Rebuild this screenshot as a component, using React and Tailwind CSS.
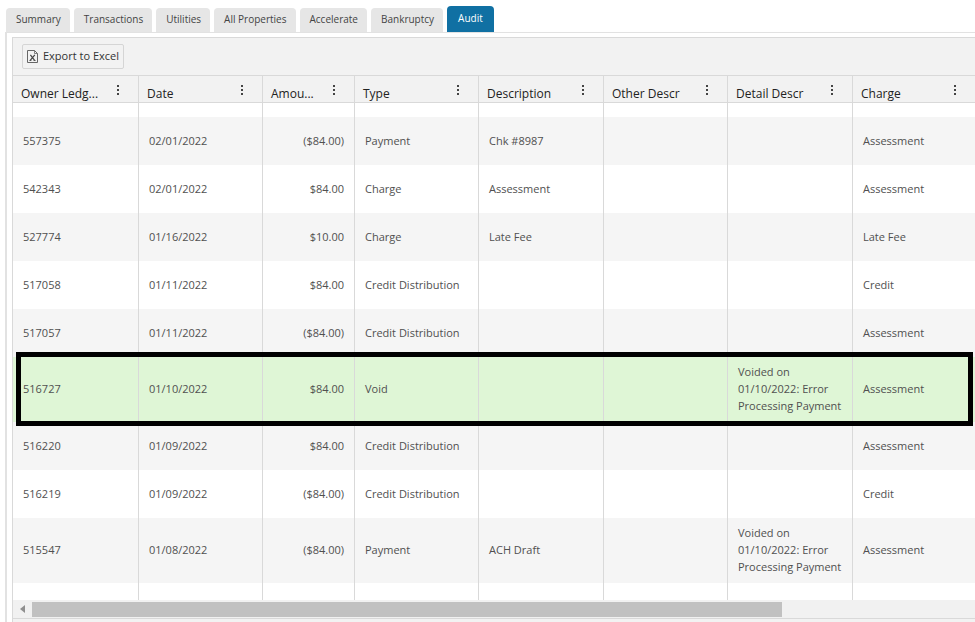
const tabs = [
  "Summary",
  "Transactions",
  "Utilities",
  "All Properties",
  "Accelerate",
  "Bankruptcy",
  "Audit",
];

const columns = [
  { label: "Owner Ledg...", width: "w-[126px]" },
  { label: "Date", width: "w-[124px]" },
  { label: "Amou...", width: "w-[92px]" },
  { label: "Type", width: "w-[124px]" },
  { label: "Description", width: "w-[125px]" },
  { label: "Other Descr", width: "w-[124px]" },
  { label: "Detail Descr", width: "w-[125px]" },
  { label: "Charge", width: "w-auto" },
];

const voidNote = "Voided on 01/10/2022: Error Processing Payment";

const rows = [
  ["557375", "02/01/2022", "($84.00)", "Payment", "Chk #8987", "", "", "Assessment"],
  ["542343", "02/01/2022", "$84.00", "Charge", "Assessment", "", "", "Assessment"],
  ["527774", "01/16/2022", "$10.00", "Charge", "Late Fee", "", "", "Late Fee"],
  ["517058", "01/11/2022", "$84.00", "Credit Distribution", "", "", "", "Credit"],
  ["517057", "01/11/2022", "($84.00)", "Credit Distribution", "", "", "", "Assessment"],
  ["516727", "01/10/2022", "$84.00", "Void", "", "", voidNote, "Assessment"],
  ["516220", "01/09/2022", "$84.00", "Credit Distribution", "", "", "", "Assessment"],
  ["516219", "01/09/2022", "($84.00)", "Credit Distribution", "", "", "", "Credit"],
  ["515547", "01/08/2022", "($84.00)", "Payment", "ACH Draft", "", voidNote, "Assessment"],
];

const HIGHLIGHTED = "516727";

const App = () => {
  return (
    <main className="flex min-h-screen flex-col overflow-hidden bg-white pl-[5px] pt-[6px] font-['Open_Sans',sans-serif] text-[#505050]">
      <Tabs />
      <section className="flex flex-1 flex-col border-l-2 border-t border-[#e2e2e2] pl-[5px] pt-1">
        <div className="flex flex-1 flex-col border-l border-t border-[#d9d9d9] bg-[#f2f2f2]">
          <Toolbar />
          <LedgerTable />
          <ScrollBar />
          <div className="flex-1 border-t border-[#d9d9d9]" />
        </div>
      </section>
    </main>
  );
};

const Tabs = () => {
  return (
    <nav className="flex items-end gap-1 pl-px text-[10px] leading-4">
      {tabs.map((tab) => (
        <button
          key={tab}
          type="button"
          className={
            tab === "Audit"
              ? "h-[26px] rounded-t bg-[#1070a3] px-[11px] pb-[3px] font-medium text-white"
              : "h-6 rounded-t-sm bg-[#e6e6e6] pl-[10px] pr-[9px] pb-[3px] text-[#444]"
          }
        >
          {tab}
        </button>
      ))}
    </nav>
  );
};

const Toolbar = () => {
  return (
    <div className="flex h-[37px] items-center px-[9px]">
      <button
        type="button"
        className="flex h-[25px] items-center gap-1 rounded-xs border border-[#d5d5d5] px-1 text-[11px] font-medium text-[#333]"
      >
        <ExcelIcon />
        Export to Excel
      </button>
    </div>
  );
};

const LedgerTable = () => {
  return (
    <table className="w-full table-fixed border-separate border-spacing-0 bg-white text-[11px]">
      <thead>
        <tr>
          {columns.map(({ label, width }) => (
            <th
              key={label}
              scope="col"
              className={`${width} h-[28px] border-y border-r border-[#d9d9d9] bg-[#f2f2f2] p-0 text-left text-[12px] font-medium text-[#222] last:border-r-0`}
            >
              <div className="flex items-start justify-between pl-2 pr-[15px]">
                <span className="pt-[10px] leading-4">{label}</span>
                <button type="button" aria-label={`${label} menu`} className="pt-2">
                  <DotsIcon />
                </button>
              </div>
            </th>
          ))}
        </tr>
      </thead>
      <tbody>
        <BlankRow height="h-[14px]" />
        {rows.map((row, index) => (
          <Row key={row[0]} row={row} striped={index % 2 === 0} />
        ))}
        <BlankRow height="h-[17px]" />
      </tbody>
    </table>
  );
};

const Row = ({ row, striped }) => {
  const highlighted = row[0] === HIGHLIGHTED;
  const color = highlighted ? "bg-[#dff6d6]" : striped ? "bg-[#f5f5f5]" : "bg-white";
  const height = row[6] ? "h-[65px]" : "h-12";

  return (
    <tr className={`${color} relative`}>
      {row.map((value, index) => (
        <td
          key={index}
          className={`${height} border-r border-[#d9d9d9] px-[10px] pb-[2px] pt-0 leading-[17px] last:border-r-0 ${
            index === 2 ? "text-right" : "text-left"
          }`}
        >
          {value}
          {highlighted && index === 0 && (
            <span className="pointer-events-none absolute -bottom-1 -top-[5px] left-[3px] right-[2px] z-10 border-[5px] border-black" />
          )}
        </td>
      ))}
    </tr>
  );
};

const BlankRow = ({ height }) => {
  return (
    <tr>
      {columns.map(({ label }) => (
        <td
          key={label}
          className={`${height} border-r border-[#d9d9d9] p-0 last:border-r-0`}
        />
      ))}
    </tr>
  );
};

const ScrollBar = () => {
  return (
    <div className="flex h-[18px] items-center bg-[#f1f1f1]">
      <button type="button" aria-label="Scroll left" className="flex w-[19px] justify-center">
        <svg width="5" height="8" viewBox="0 0 5 8" fill="#8f8f8f">
          <path d="M5 0v8L0 4z" />
        </svg>
      </button>
      <div className="flex-1">
        <div className="h-[15px] w-[79.5%] bg-[#c1c1c1]" />
      </div>
    </div>
  );
};

const ExcelIcon = () => {
  return (
    <svg width="12" height="13" viewBox="0 0 12 13" fill="none" stroke="#666">
      <path d="M.5 .5h7l3 3v9h-10z" />
      <path d="M7.5 .5v3h3" strokeWidth=".8" />
      <path d="M3.4 4.8l4.2 5.6M7.8 4.8l-4.6 5.6" stroke="#444" strokeWidth="1.2" />
      <path d="M2.4 10.5h2M6.6 10.5h2" stroke="#444" strokeWidth=".8" />
    </svg>
  );
};

const DotsIcon = () => {
  return (
    <svg width="10" height="12" viewBox="0 0 10 12" fill="#444">
      <rect x="4" y="1" width="2" height="2" />
      <rect x="4" y="5" width="2" height="2" />
      <rect x="4" y="9" width="2" height="2" />
    </svg>
  );
};

export default App;
